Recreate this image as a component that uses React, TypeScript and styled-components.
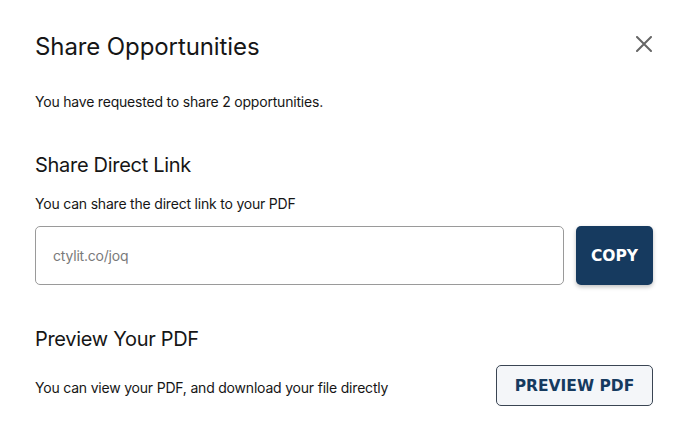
import React from "react";
import styled, { createGlobalStyle } from "styled-components";

const GlobalStyle = createGlobalStyle`
  body {
    margin: 0;
    background: #ffffff;
    font-family: Inter, "Noto Sans", sans-serif;
    color: #161616;
  }
`;

const Modal = styled.div`
  width: 688px;
  height: 442px;
  box-sizing: border-box;
  padding: 32px 35px 0 35px;
  background: #ffffff;
`;

const Header = styled.div`
  display: flex;
  justify-content: space-between;
  align-items: flex-start;
`;

const Title = styled.h1`
  margin: 0;
  font-size: 24px;
  line-height: 30px;
  font-weight: 400;
  letter-spacing: -0.1px;
  color: #161616;
`;

const CloseButton = styled.button`
  border: none;
  background: none;
  padding: 0;
  margin: 4px 1px 0 0;
  width: 16px;
  height: 16px;
  cursor: pointer;
  display: flex;
`;

const Text = styled.p<{ $top: number }>`
  margin: ${(p) => p.$top}px 0 0 0;
  font-size: 14px;
  line-height: 20px;
  letter-spacing: -0.2px;
  color: #161616;
`;

const SectionTitle = styled.h2<{ $top: number }>`
  margin: ${(p) => p.$top}px 0 0 0;
  font-size: 20px;
  line-height: 26px;
  font-weight: 400;
  letter-spacing: -0.3px;
  color: #161616;
`;

const LinkRow = styled.div`
  display: flex;
  gap: 12px;
  margin-top: 12px;
  height: 59px;
`;

const LinkInput = styled.input`
  flex: 1;
  box-sizing: border-box;
  height: 59px;
  border: 1px solid #9a9a9a;
  border-radius: 5px;
  padding: 0 17px;
  font-family: Inter, "Noto Sans", sans-serif;
  font-size: 14px;
  letter-spacing: -0.2px;
  color: #7a7a7a;
  outline: none;
  &::placeholder {
    color: #7a7a7a;
  }
`;

const CopyButton = styled.button`
  width: 77px;
  height: 59px;
  border: none;
  border-radius: 5px;
  background: #163a5f;
  color: #ffffff;
  font-family: "DejaVu Sans", Inter, sans-serif;
  font-weight: 700;
  font-size: 15.5px;
  box-shadow: 0 2px 4px rgba(0, 0, 0, 0.25);
  cursor: pointer;
`;

const PreviewRow = styled.div`
  display: flex;
  justify-content: space-between;
  align-items: center;
  margin-top: 13px;
`;

const PreviewText = styled(Text)`
  padding-top: 4px;
`;

const PreviewButton = styled.button`
  width: 157px;
  height: 41px;
  box-sizing: border-box;
  border: 1.5px solid #3a4553;
  border-radius: 5px;
  background: #f4f6f9;
  color: #163a5f;
  font-family: "DejaVu Sans", Inter, sans-serif;
  font-weight: 700;
  font-size: 15.5px;
  cursor: pointer;
`;

const App = () => {
  return (
    <>
      <GlobalStyle />
      <Modal>
        <Header>
          <Title>Share Opportunities</Title>
          <CloseButton aria-label="Close">
            <svg width="16" height="16" viewBox="0 0 16 16">
              <path
                d="M1 1 L15 15 M15 1 L1 15"
                stroke="#666666"
                strokeWidth="2"
                strokeLinecap="round"
              />
            </svg>
          </CloseButton>
        </Header>
        <Text $top={30}>You have requested to share 2 opportunities.</Text>

        <SectionTitle $top={40}>Share Direct Link</SectionTitle>
        <Text $top={16}>You can share the direct link to your PDF</Text>
        <LinkRow>
          <LinkInput placeholder="ctylit.co/joq" readOnly />
          <CopyButton>COPY</CopyButton>
        </LinkRow>

        <SectionTitle $top={41}>Preview Your PDF</SectionTitle>
        <PreviewRow>
          <PreviewText $top={0}>
            You can view your PDF, and download your file directly
          </PreviewText>
          <PreviewButton>PREVIEW PDF</PreviewButton>
        </PreviewRow>
      </Modal>
    </>
  );
};

export default App;
